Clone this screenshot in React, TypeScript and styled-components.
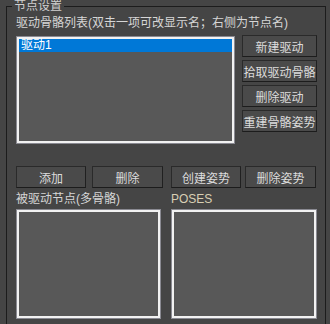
import React from 'react';
import styled, {createGlobalStyle} from 'styled-components';

const GlobalStyle = createGlobalStyle`
  html, body {
    margin: 0;
    padding: 0;
    background: #454545;
    height: 324px;
    overflow: hidden;
  }
  body {
    font-family: "Liberation Sans", "Noto Sans CJK SC", sans-serif;
    font-size: 12px;
    color: #d8d8d8;
  }
`;

const GroupBox = styled.fieldset`
  margin: -1px 4px 0 6px;
  padding: 3px 8px 20px 9px;
  border: 1px solid #1c1c1c;
  min-width: 0;
`;

const Title = styled.legend`
  margin-left: -4px;
  padding: 1px 2px 0;
  line-height: 13px;
  color: #d0d0d0;
`;

const Label = styled.div<{$tone?: string}>`
  line-height: 14px;
  height: 14px;
  white-space: nowrap;
  color: ${p => p.$tone || '#d6d6d6'};
`;

const MainRow = styled.div`
  display: flex;
  justify-content: space-between;
  margin-top: 5px;
`;

const ListBox = styled.div<{$w?: number; $h: number}>`
  box-sizing: border-box;
  width: ${p => (p.$w ? p.$w + 'px' : '100%')};
  height: ${p => p.$h}px;
  margin-top: ${p => (p.$w === 219 ? 1 : 0)}px;
  background: #585858;
  border: 1px solid #8a8a92;
  box-shadow: inset 0 0 0 2px #f2f2f2;
  padding: 2px;
`;

const Item = styled.div<{$selected?: boolean}>`
  height: 13px;
  line-height: 13px;
  padding-left: 2px;
  color: ${p => (p.$selected ? '#ffffff' : '#d8d8d8')};
  background: ${p => (p.$selected ? '#0078d7' : 'transparent')};
`;

const ButtonColumn = styled.div`
  display: flex;
  flex-direction: column;
  gap: 3px;
  width: 75px;
`;

const Button = styled.button`
  box-sizing: border-box;
  height: 22px;
  padding: 0;
  margin: 0;
  font: inherit;
  font-size: 12px;
  color: #dcdcdc;
  background: #4a4a4a;
  border: 1px solid #2a2a2a;
  border-bottom-color: #1c1c1c;
  border-right-color: #202020;
  white-space: nowrap;
`;

const Lower = styled.div`
  display: grid;
  grid-template-columns: 147px 146px;
  column-gap: 8px;
  margin-top: 22px;
`;

const Column = styled.div`
  display: flex;
  flex-direction: column;
  gap: 3px;
`;

const ButtonPair = styled.div<{$gap: number}>`
  display: grid;
  grid-template-columns: 70px 71px;
  column-gap: ${p => p.$gap}px;
  margin-bottom: 1px;
`;

export default function App() {
  return (
    <>
      <GlobalStyle/>
      <GroupBox>
        <Title>节点设置</Title>
        <Label>驱动骨骼列表(双击一项可改显示名；右侧为节点名)</Label>
        <MainRow>
          <ListBox $w={219} $h={108}>
            <Item $selected>驱动1</Item>
          </ListBox>
          <ButtonColumn>
            <Button>新建驱动</Button>
            <Button>拾取驱动骨骼</Button>
            <Button>删除驱动</Button>
            <Button>重建骨骼姿势</Button>
          </ButtonColumn>
        </MainRow>
        <Lower>
          <Column>
            <ButtonPair $gap={6}>
              <Button>添加</Button>
              <Button>删除</Button>
            </ButtonPair>
            <Label>被驱动节点(多骨骼)</Label>
            <ListBox $w={145} $h={110}/>
          </Column>
          <Column>
            <ButtonPair $gap={4}>
              <Button>创建姿势</Button>
              <Button>删除姿势</Button>
            </ButtonPair>
            <Label $tone="#d8cfb4">POSES</Label>
            <ListBox $h={110}/>
          </Column>
        </Lower>
      </GroupBox>
    </>
  );
}
